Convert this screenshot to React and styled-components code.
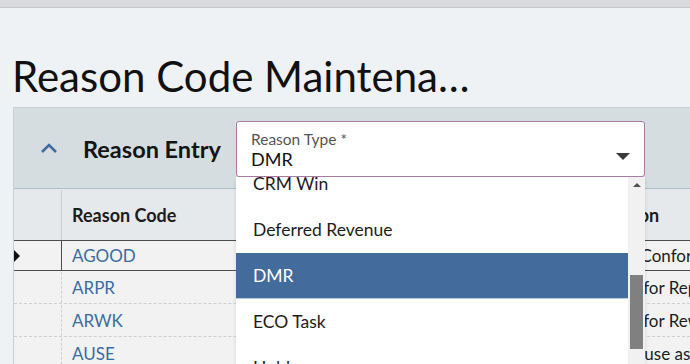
import React from "react";
import styled, { createGlobalStyle } from "styled-components";

const GlobalStyle = createGlobalStyle`
  html, body {
    margin: 0;
    height: 100%;
    overflow: hidden;
  }
  body {
    background: #eff2f5;
    font-family: Lato, "Open Sans", sans-serif;
    color: #1a1a1a;
  }
`;

const TopBar = styled.div`
  height: 7px;
  background: #d9dade;
  border-bottom: 1px solid #c4c6ca;
`;

const Title = styled.h1`
  margin: 0;
  padding: 43px 0 0 12px;
  height: 56px;
  font-size: 42px;
  font-weight: 400;
  line-height: 50px;
  color: #111;
  white-space: nowrap;
`;

const Panel = styled.section`
  position: relative;
  margin-left: 13px;
  border-left: 1px solid #c9d0d4;
  border-top: 1px solid #c9d0d4;
`;

const PanelHeader = styled.div`
  display: flex;
  align-items: center;
  height: 80px;
  padding-left: 26px;
  gap: 25px;
  background: #d5dde1;
  border-bottom: 1px solid #a9c0cd;
`;

const Chevron = styled.svg`
  width: 18px;
  height: 12px;
  flex: none;
`;

const PanelTitle = styled.h2`
  margin: 0;
  padding-top: 1px;
  font-size: 23.5px;
  font-weight: 700;
  color: #141414;
`;

const Grid = styled.div`
  background: #f2f2f2;
`;

const Row = styled.div`
  display: grid;
  grid-template-columns: 48px 494px 1fr;
  height: ${(p) => p.height}px;
  box-sizing: border-box;
  background: ${(p) => (p.header ? "#e5e9ec" : "#f2f2f2")};
  border-top: 1px solid ${(p) => (p.selected ? "#4d4d4d" : "transparent")};
  border-bottom: 1px ${(p) => (p.selected ? "solid #4d4d4d" : p.header ? "solid #e5e9ec" : "dashed #cfcfcf")};
  margin-top: ${(p) => (p.selected ? "-1px" : "0")};
`;

const SelectorCell = styled.div`
  position: relative;
  border-right: 1px ${(p) => p.line};
`;

const RowArrow = styled.span`
  position: absolute;
  left: 0;
  top: 50%;
  margin-top: -6px;
  width: 0;
  height: 0;
  border-top: 6px solid transparent;
  border-bottom: 6px solid transparent;
  border-left: 6px solid #111;
`;

const Cell = styled.div`
  display: flex;
  align-items: center;
  padding-left: 10px;
  overflow: hidden;
  white-space: nowrap;
  font-size: ${(p) => (p.header ? 18 : 17)}px;
  font-weight: ${(p) => (p.header ? 700 : 400)};
  color: ${(p) => (p.link ? "#3a6ca3" : "#1c1c1c")};
`;

const Dropdown = styled.div`
  position: absolute;
  left: 222px;
  top: 13px;
  width: 409px;
  z-index: 2;
`;

const Field = styled.div`
  position: relative;
  box-sizing: border-box;
  height: 56px;
  padding: 8px 0 0 14px;
  background: #fff;
  border: 1px solid #a97ba0;
  border-radius: 3px;
`;

const FieldLabel = styled.div`
  font-size: 15.5px;
  line-height: 18px;
  color: #555;
`;

const FieldValue = styled.div`
  font-size: 18px;
  line-height: 22px;
  color: #111;
`;

const Caret = styled.span`
  position: absolute;
  right: 14px;
  top: 31px;
  width: 0;
  height: 0;
  border-left: 7px solid transparent;
  border-right: 7px solid transparent;
  border-top: 7px solid #3a3a3a;
`;

const Menu = styled.div`
  display: flex;
  height: 200px;
  background: #fff;
  box-shadow: 0 2px 4px rgba(0, 0, 0, 0.12);
`;

const MenuViewport = styled.div`
  flex: 1;
  overflow: hidden;
`;

const MenuList = styled.ul`
  margin: -16px 0 0;
  padding: 0;
  list-style: none;
`;

const MenuItem = styled.li`
  box-sizing: border-box;
  height: 46px;
  padding-left: 17px;
  display: flex;
  align-items: center;
  font-size: 17.5px;
  color: ${(p) => (p.active ? "#fff" : "#1c1c1c")};
  background: ${(p) => (p.active ? "#436b9b" : "#fff")};
  border-bottom: 1px solid ${(p) => (p.active ? "#b8cde0" : "transparent")};
`;

const ScrollTrack = styled.div`
  position: relative;
  width: 17px;
  background: #f1f1f1;
`;

const ScrollUp = styled.span`
  position: absolute;
  left: 5px;
  top: 6px;
  width: 0;
  height: 0;
  border-left: 4px solid transparent;
  border-right: 4px solid transparent;
  border-bottom: 4px solid #505050;
`;

const ScrollThumb = styled.div`
  position: absolute;
  left: 2px;
  top: 98px;
  width: 13px;
  height: 74px;
  background: #808080;
`;

const rows = [
  { code: "AGOOD", desc: "Accepted Conforming", selected: true, height: 31 },
  { code: "ARPR", desc: "Approved for Repair", height: 33 },
  { code: "ARWK", desc: "Approved for Rework", height: 33 },
  { code: "AUSE", desc: "Accepted, use as is", height: 33 },
];

const reasonTypes = ["CRM Win", "Deferred Revenue", "DMR", "ECO Task", "Hold"];

export default function App() {
  return (
    <>
      <GlobalStyle />
      <TopBar />
      <Title>Reason Code Maintena…</Title>
      <Panel>
        <PanelHeader>
          <Chevron viewBox="0 0 18 12">
            <polyline points="2,10 9,3 16,10" fill="none" stroke="#3f6c9c" strokeWidth="2.6" />
          </Chevron>
          <PanelTitle>Reason Entry</PanelTitle>
        </PanelHeader>

        <Grid>
          <Row header height={52}>
            <SelectorCell line="solid #c9cfd3" />
            <Cell header>Reason Code</Cell>
            <Cell header>Description</Cell>
          </Row>
          {rows.map((r) => (
            <Row key={r.code} selected={r.selected} height={r.height}>
              <SelectorCell line={r.selected ? "solid #4d4d4d" : "dashed #cfcfcf"}>
                {r.selected && <RowArrow />}
              </SelectorCell>
              <Cell link>{r.code}</Cell>
              <Cell>{r.desc}</Cell>
            </Row>
          ))}
        </Grid>

        <Dropdown>
          <Field>
            <FieldLabel>Reason Type *</FieldLabel>
            <FieldValue>DMR</FieldValue>
            <Caret />
          </Field>
          <Menu>
            <MenuViewport>
              <MenuList>
                {reasonTypes.map((t) => (
                  <MenuItem key={t} active={t === "DMR"}>
                    {t}
                  </MenuItem>
                ))}
              </MenuList>
            </MenuViewport>
            <ScrollTrack>
              <ScrollUp />
              <ScrollThumb />
            </ScrollTrack>
          </Menu>
        </Dropdown>
      </Panel>
    </>
  );
}
